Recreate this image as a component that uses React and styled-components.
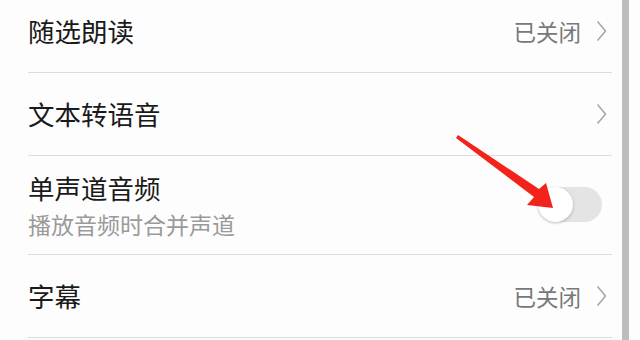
import React from "react";
import styled, { createGlobalStyle } from "styled-components";

const GlobalStyle = createGlobalStyle`
  html, body {
    margin: 0;
    padding: 0;
    background: #fdfdfd;
  }
  body {
    font-family: "Noto Sans CJK SC", "Noto Sans", sans-serif;
  }
`;

const Screen = styled.div`
  position: relative;
  width: 640px;
  height: 340px;
  overflow: hidden;
  display: flex;
  background: #fdfdfd;
`;

const List = styled.div`
  flex: 1;
  margin-top: -10px;
  padding-left: 28px;
  padding-right: 10px;
`;

const Scrollbar = styled.div`
  width: 7px;
  background: #bdbdbd;
  margin-right: 11px;
`;

const Row = styled.div`
  display: flex;
  align-items: center;
  justify-content: space-between;
  height: ${(p) => (p.tall ? "98px" : "82px")};
  border-bottom: 1px solid #dcdcdc;
`;

const Labels = styled.div`
  display: flex;
  flex-direction: column;
`;

const Title = styled.div`
  font-size: 26.5px;
  line-height: 38px;
  color: #1a1a1a;
`;

const Sub = styled.div`
  font-size: 23px;
  line-height: 34px;
  color: #9a9a9a;
`;

const Trail = styled.div`
  display: flex;
  align-items: center;
  gap: 15px;
  padding-right: 5px;
`;

const Value = styled.span`
  font-size: 22.5px;
  color: #787878;
`;

const Toggle = styled.div`
  position: relative;
  width: 64px;
  height: 35px;
  border-radius: 18px;
  background: #e4e4e4;
  margin-right: 10px;
  margin-top: -2px;
`;

const Knob = styled.div`
  position: absolute;
  left: 0;
  top: 0;
  width: 35px;
  height: 35px;
  border-radius: 50%;
  background: #fff;
  box-shadow: 0 1px 3px rgba(0, 0, 0, 0.25);
`;

const Annotation = styled.svg`
  position: absolute;
  left: 0;
  top: 0;
  pointer-events: none;
`;

const Chevron = () => (
  <svg width="11" height="22" viewBox="0 0 11 22">
    <path d="M1.5 1.5 L9.5 11 L1.5 20.5" fill="none" stroke="#a8a8a8" strokeWidth="1.6" />
  </svg>
);

const items = [
  { title: "随选朗读", value: "已关闭" },
  { title: "文本转语音" },
  { title: "单声道音频", sub: "播放音频时合并声道", toggle: true },
  { title: "字幕", value: "已关闭" },
];

export default function App() {
  return (
    <>
      <GlobalStyle />
      <Screen>
        <List>
          {items.map((item, i) => (
            <Row key={i} tall={item.sub ? 1 : 0}>
              <Labels>
                <Title>{item.title}</Title>
                {item.sub && <Sub>{item.sub}</Sub>}
              </Labels>
              {item.toggle ? (
                <Toggle>
                  <Knob />
                </Toggle>
              ) : (
                <Trail>
                  {item.value && <Value>{item.value}</Value>}
                  <Chevron />
                </Trail>
              )}
            </Row>
          ))}
        </List>
        <Scrollbar />
        <Annotation width="640" height="340">
          <polygon
            points="458,135 539,189 546,183 553,208 527,205 534,197 456,138"
            fill="#f2231b"
          />
        </Annotation>
      </Screen>
    </>
  );
}
